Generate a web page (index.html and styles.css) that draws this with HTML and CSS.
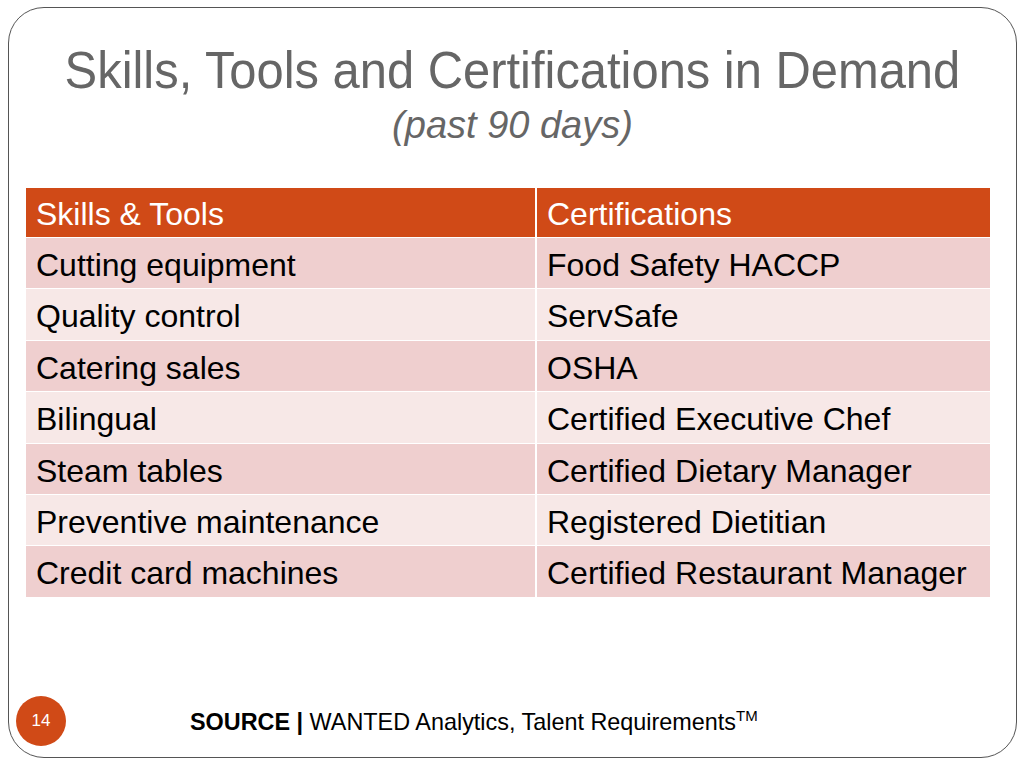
FILE: index.html
```html
<!DOCTYPE html>
<html>
<head>
<meta charset="utf-8">
<link rel="stylesheet" href="styles.css">
</head>
<body>
<div class="slide">
  <div class="frame">
    <header class="head">
      <h1 class="title">Skills, Tools and Certifications in Demand</h1>
      <p class="subtitle">(past 90 days)</p>
    </header>
    <div class="table">
      <div class="row hdr"><div class="cell">Skills &amp; Tools</div><div class="cell">Certifications</div></div>
      <div class="row odd"><div class="cell">Cutting equipment</div><div class="cell">Food Safety HACCP</div></div>
      <div class="row even"><div class="cell">Quality control</div><div class="cell">ServSafe</div></div>
      <div class="row odd"><div class="cell">Catering sales</div><div class="cell">OSHA</div></div>
      <div class="row even"><div class="cell">Bilingual</div><div class="cell">Certified Executive Chef</div></div>
      <div class="row odd"><div class="cell">Steam tables</div><div class="cell">Certified Dietary Manager</div></div>
      <div class="row even"><div class="cell">Preventive maintenance</div><div class="cell">Registered Dietitian</div></div>
      <div class="row odd"><div class="cell">Credit card machines</div><div class="cell">Certified Restaurant Manager</div></div>
    </div>
    <footer class="foot">
      <div class="pagenum">14</div>
      <div class="source"><b class="src">SOURCE |</b> WANTED Analytics, Talent Requirements<sup>TM</sup></div>
    </footer>
  </div>
</div>
</body>
</html>
```

FILE: styles.css
```css
html, body { margin: 0; padding: 0; background: #fff; }
.slide { width: 1024px; height: 768px; padding: 7px 0 0 8px; box-sizing: border-box; }
.frame {
  width: 1009px; height: 751px; box-sizing: border-box;
  border: 1.5px solid #555; border-radius: 36px;
  display: flex; flex-direction: column;
  font-family: "Liberation Sans", Arial, sans-serif;
}
.head { text-align: center; padding-top: 32px; height: 180px; box-sizing: border-box; }
.title {
  margin: 0; font-weight: normal; color: #666; font-size: 52px; line-height: 60px;
  display: inline-block; transform: scaleX(0.94); white-space: nowrap;
}
.subtitle { margin: 3px 0 0; font-style: italic; color: #666; font-size: 38px; line-height: 44px; }
.table { margin-left: 17px; width: 964px; display: flex; flex-direction: column; gap: 1px; }
.row { display: grid; grid-template-columns: 509px 1fr; gap: 2px; }
.cell { height: 50.4px; line-height: 54px; padding-left: 10px; font-size: 32px; color: #000; white-space: nowrap; }
.hdr .cell { background: #D04A17; color: #fff; height: 49px; line-height: 52px; }
.odd .cell { background: #EFCFCF; }
.even .cell { background: #F7E8E7; }
.foot { margin-top: auto; height: 72px; display: flex; align-items: center; padding-left: 7px; padding-bottom: 0; box-sizing: border-box; }
.pagenum {
  width: 50px; height: 50px; border-radius: 50%; background: #D04A17; color: #fff;
  font-size: 17px; display: flex; align-items: center; justify-content: center;
}
.source { margin-left: 124px; font-size: 23.4px; color: #000; }
.src { font-weight: bold; }
.source sup { font-size: 15px; }
```
